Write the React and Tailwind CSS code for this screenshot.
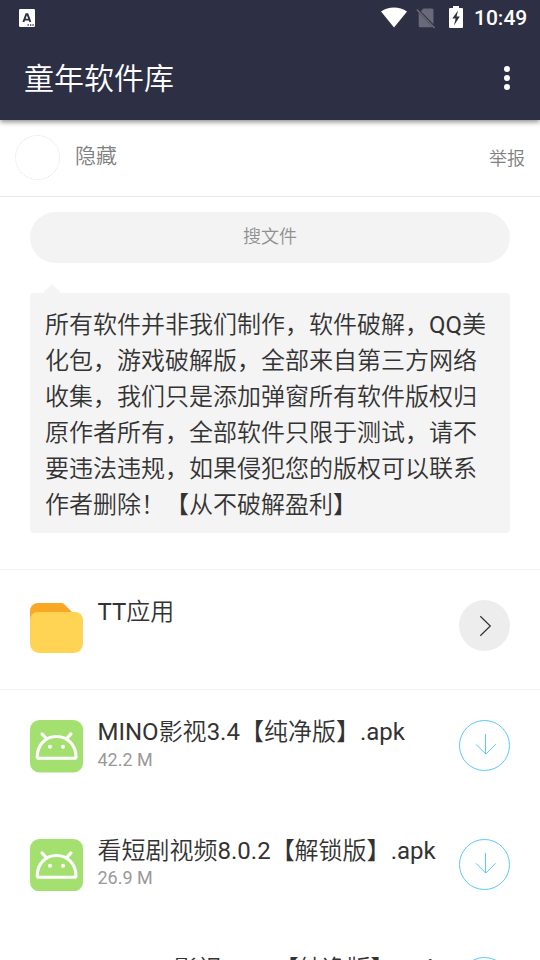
import React from "react";

const files = [
	{ name: "MINO影视3.4【纯净版】.apk", size: "42.2 M" },
	{ name: "看短剧视频8.0.2【解锁版】.apk", size: "26.9 M" },
	{ name: "MINOX影视3.2.1【纯净版】.apk", size: "31.5 M", plain: true },
];

// Latin runs keep the regular weight, Chinese runs are drawn lighter
const MixedText = ({ children }) =>
	children.split(/([A-Za-z0-9.]+)/).map((part, index) => (
		<span key={index} className={index % 2 ? "font-normal" : "font-[350]"}>
			{part}
		</span>
	));

const StatusBar = () => (
	<div className="flex h-9 items-center justify-between pl-[19px] pr-3">
		<svg width="16" height="18" viewBox="0 0 16 18">
			<rect width="16" height="18" rx="1.2" fill="#fff" />
			<path
				d="M4.4 13 7.300 5.200h1.200l2.900 7.800M5.600 10.600h4.600"
				fill="none"
				stroke="#2d2f44"
				strokeWidth="1.900"
			/>
			<path d="M8.500 16h1.300M11 16h1.300M13.400 16h1.300" stroke="#2d2f44" strokeWidth="1.300" />
		</svg>
		<div className="flex items-center">
			<svg width="26" height="21" viewBox="0 0 26 21" className="relative -top-px">
				<path d="M0 4.500C7.500-.9 18.500-.9 26 4.500L13 20.500z" fill="#fff" />
			</svg>
			<svg width="20" height="21" viewBox="0 0 20 21" className="ml-[9px]">
				<path d="M7.500.5H16A1.500 1.500 0 0 1 17.500 2v14.300L4.800 3.200zM2.700 4.800 16.500 19.300H4.200a1.500 1.500 0 0 1-1.500-1.500z" fill="#696a79" />
				<path d="m.8 1.500 17.800 18.500" stroke="#696a79" strokeWidth="1.600" />
			</svg>
			<svg width="14" height="22" viewBox="0 0 14 22" className="relative -top-px ml-[13px]">
				<path d="M4 0h6v2h3a1 1 0 0 1 1 1v18a1 1 0 0 1-1 1H1a1 1 0 0 1-1-1V3a1 1 0 0 1 1-1h3z" fill="#fff" />
				<path d="M9 4.500 3.300 12.500H6.600L5 19.500 10.800 10.500H7.600z" fill="#2d2f44" />
			</svg>
			<span className="ml-[11px] w-[54px] text-[21px] leading-none font-medium text-white">
				10:49
			</span>
		</div>
	</div>
);

const Header = () => (
	<header className="relative h-[120px] bg-[#2d2f44] shadow-[0_2px_5px_rgba(0,0,0,0.45)]">
		<StatusBar />
		<div className="flex h-[84px] items-center justify-between pl-6 pr-[30px]">
			<h1 className="pt-px text-[30px] leading-none font-[350] text-white">童年软件库</h1>
			<svg width="6" height="24" viewBox="0 0 6 24" fill="#fff">
				<circle cx="3" cy="3" r="3" />
				<circle cx="3" cy="12" r="3" />
				<circle cx="3" cy="21" r="3" />
			</svg>
		</div>
	</header>
);

const FolderIcon = () => (
	<svg width="53" height="50" viewBox="0 0 53 50" className="mt-[3px]">
		<path d="M0 18V8a8 8 0 0 1 8-8h24l1.500.6L44 11v7z" fill="#f9a825" />
		<path d="M8 9h37a8 8 0 0 1 8 8v24a9 9 0 0 1-9 9H9a9 9 0 0 1-9-9V17a8 8 0 0 1 8-8z" fill="#ffd454" />
	</svg>
);

const ApkIcon = ({ plain }) => (
	<svg width="53" height="52.500" viewBox="0 0 53 53" preserveAspectRatio="none">
		<rect width="53" height="53" rx="9.500" fill={plain ? "#fff" : "#a4e070"} />
		<g fill="none" stroke="#fff" strokeWidth="3.100" strokeLinecap="round">
			<path d="M8.800 38.700Q7.200 38.700 7.200 37.100C7.400 25 15.500 16.700 26.500 16.700S45.800 25 46 37.100Q46 38.700 44.400 38.700z" />
			<path d="m12 14 4.500 5M41 14l-4.500 5" />
		</g>
		<circle cx="20" cy="27" r="2" fill="#fff" />
		<circle cx="33" cy="27" r="2" fill="#fff" />
	</svg>
);

const FileRow = ({ name, size, plain }) => (
	<li className="flex h-[118.500px] items-start px-[30px]">
		<ApkIcon plain={plain} />
		<div className="ml-[14.500px] flex-1 whitespace-nowrap">
			<p className="h-[28.500px] text-[24px] leading-6 text-[#333]">
				<MixedText>{name}</MixedText>
			</p>
			<p className="text-[18px] leading-[22px] text-[#999]">{size}</p>
		</div>
		<button className="flex size-[51px] items-center justify-center rounded-full border border-[#5ac8fa]">
			<svg width="51" height="51" viewBox="0 0 51 51" fill="none" stroke="#5ac8fa" className="shrink-0">
				<path d="M26.500 14v20M17 24.300l9.800 9.800 9.800-9.800" />
			</svg>
		</button>
	</li>
);

const App = () => {
	return (
		<div className="h-[960px] w-[540px] overflow-hidden bg-white font-['Roboto','Noto_Sans_CJK_SC',sans-serif]">
			<Header />
			<section className="flex h-[77px] items-center justify-between border-b border-[#e8e8e8] px-[15px]">
				<div className="flex items-center pb-px">
					<div className="size-[45px] rounded-full border border-dotted border-[#e8dfdf]"></div>
					<span className="ml-[15px] pb-[3px] text-[21px] leading-none font-[350] text-[#808080]">隐藏</span>
				</div>
				<span className="pt-[2px] text-[18px] leading-none font-[350] text-[#808080]">举报</span>
			</section>
			<div className="mx-[30px] mt-[15px] flex h-[51px] items-center justify-center rounded-full bg-[#f3f3f3] pb-[2px] text-[18px] leading-none font-[350] text-[#909090]">
				搜文件
			</div>
			<div className="relative mx-[30px] mt-[30px] h-[240px] rounded-[4px] bg-[#f4f4f4] px-[15px] pt-[14px]">
				<div className="absolute -top-[9px] left-[13px] border-x-[9.500px] border-b-[9px] border-x-transparent border-b-[#f4f4f4]"></div>
				<p className="text-[24px] leading-9 font-[350] text-[#333]">
					<MixedText>所有软件并非我们制作，软件破解，QQ美</MixedText>
					<br />
					化包，游戏破解版，全部来自第三方网络
					<br />
					收集，我们只是添加弹窗所有软件版权归
					<br />
					原作者所有，全部软件只限于测试，请不
					<br />
					要违法违规，如果侵犯您的版权可以联系
					<br />
					作者删除！【从不破解盈利】
				</p>
			</div>
			<section className="mt-[36px] flex h-[120px] items-start border-t border-[#f3f3f3] px-[30px] pt-[30px]">
				<FolderIcon />
				<p className="ml-[14.500px] flex-1 text-[24px] leading-6 text-[#333]">
					<MixedText>TT应用</MixedText>
				</p>
				<button className="flex size-[51px] items-center justify-center rounded-full bg-[#ededed]">
					<svg width="51" height="51" viewBox="0 0 51 51" fill="none" stroke="#333" strokeWidth="1.200">
						<path d="m21.300 16.300 10 9.700-10 9.700" />
					</svg>
				</button>
			</section>
			<ul className="border-t border-[#f3f3f3] pt-[30px]">
				{files.map((file, index) => (
					<FileRow key={index} {...file} />
				))}
			</ul>
		</div>
	);
};

export default App;
